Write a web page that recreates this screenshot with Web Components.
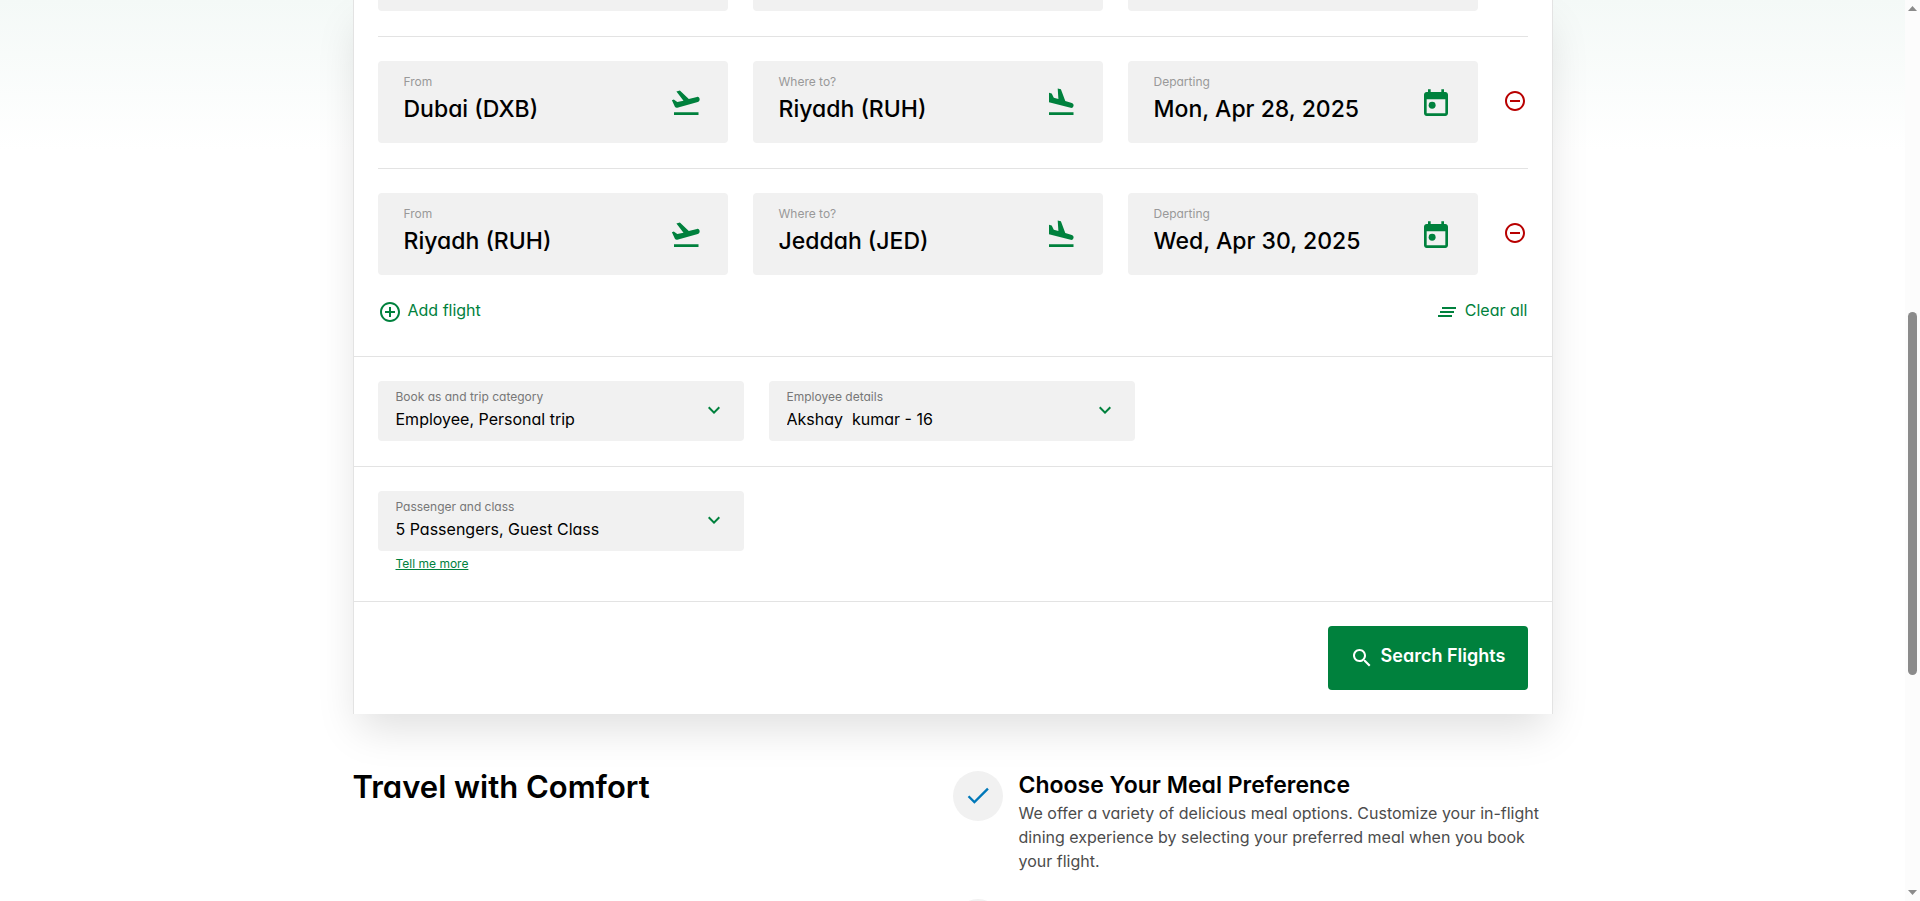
<!DOCTYPE html>
<html lang="en">
<head>
<meta charset="utf-8">
<title>Book flights</title>
<style>
  body {
    margin: 0;
    height: 100vh;
    display: flex;
    overflow: hidden;
    background: #fff;
    color: #000;
    font-family: Inter, "Open Sans", sans-serif;
    font-size: 16px;
    line-height: 24px;
    font-feature-settings: "cv11";
    --green: #00813d;
    --field: #f1f1f1;
    --line: #e3e3e3;
  }
</style>
</head>
<body>
<page-view>
  <booking-card>
    <leg-stub slot="legs"></leg-stub>
    <flight-leg slot="legs" from="Dubai (DXB)" to="Riyadh (RUH)" date="Mon, Apr 28, 2025"></flight-leg>
    <flight-leg slot="legs" from="Riyadh (RUH)" to="Jeddah (JED)" date="Wed, Apr 30, 2025"></flight-leg>
    <picker-field slot="trip" label="Book as and trip category">Employee, Personal trip</picker-field>
    <picker-field slot="trip" label="Employee details">Akshay&nbsp; kumar - 16</picker-field>
    <picker-field slot="class" label="Passenger and class">5 Passengers, Guest Class</picker-field>
  </booking-card>
  <comfort-section>
    <span slot="title">Travel with Comfort</span>
    <comfort-item>
      <span slot="title">Choose Your Meal Preference</span>
      We offer a variety of delicious meal options. Customize your in-flight dining experience by selecting your preferred meal when you book your flight.
    </comfort-item>
    <comfort-item></comfort-item>
  </comfort-section>
</page-view>
<scroll-track></scroll-track>

<script>
const ICONS = {
  takeoff: ['0 0 32 32', '<path d="M4 24.300h24.500V27H4zM27 8.900C28.300 8.600 29.300 9.600 29.600 10.800 29.900 12.200 29.200 13.500 27.800 13.900L7.300 19.800C6.200 20 5.500 19.700 4.900 18.800L1.900 12.300 3.800 11.600 7.300 14 13.500 12.700 6.400 3.600 9.900 2.600 18.800 11z"/>'],
  landing: ['0 0 32 32', '<path d="M4 24.300h24.500V27H4zM4 4.700L6.700 5.400 8.800 9.700 13.400 11 12.700.4 15.900 1.200 20.300 13 26.800 14.900C28.200 15.300 28.900 16.600 28.500 18 28.100 19.500 27 20.200 25.600 19.800L4 14.300z"/>'],
  calendar: ['0 0 24 24', '<path fill-rule="evenodd" d="M19 3h-1V1h-2v2H8V1H6v2H5c-1.100 0-2 .9-2 2v14c0 1.100.9 2 2 2h14c1.100 0 2-.9 2-2V5c0-1.100-.9-2-2-2zm0 16H5V8.500h14z"/><circle cx="9.100" cy="13" r="2.600"/>'],
  remove: ['0 0 24 24', '<path d="M7 11v2h10v-2H7zm5-9C6.480 2 2 6.480 2 12s4.480 10 10 10 10-4.480 10-10S17.520 2 12 2zm0 18c-4.410 0-8-3.590-8-8s3.590-8 8-8 8 3.590 8 8-3.590 8-8 8z"/>'],
  add: ['0 0 24 24', '<path d="M13 7h-2v4H7v2h4v4h2v-4h4v-2h-4V7zm-1-5C6.480 2 2 6.480 2 12s4.480 10 10 10 10-4.480 10-10S17.520 2 12 2zm0 18c-4.410 0-8-3.590-8-8s3.590-8 8-8 8 3.590 8 8-3.590 8-8 8z"/>'],
  clear: ['0 0 24 24', '<path d="M5 13h14v-2H5v2zm-2 4h14v-2H3v2zM7 7v2h14V7H7z"/>'],
  chevron: ['0 0 24 24', '<path d="M16.590 8.590L12 13.170 7.410 8.590 6 10l6 6 6-6z"/>'],
  search: ['0 0 24 24', '<path d="M15.500 14h-.79l-.28-.27C15.410 12.590 16 11.110 16 9.500 16 5.910 13.090 3 9.500 3S3 5.910 3 9.500 5.910 16 9.500 16c1.610 0 3.090-.59 4.230-1.570l.27.28v.79l5 4.990L20.490 19l-4.990-5zm-6 0C7.010 14 5 11.990 5 9.500S7.010 5 9.500 5 14 7.010 14 9.500 11.990 14 9.500 14z"/>'],
  check: ['2 2.500 20 20', '<path d="M9 16.170L4.830 12l-1.420 1.410L9 19 21 7l-1.410-1.410z"/>']
};

const RESET = `
  *, *::before, *::after { box-sizing: border-box; }
  button, input, select { font: inherit; font-feature-settings: inherit; color: inherit; border: 0; margin: 0; padding: 0; background: none; outline: 0; }
  button { cursor: pointer; }
`;

class BaseElement extends HTMLElement {
  connectedCallback() {
    if (this.shadowRoot) return;
    this.attachShadow({ mode: 'open' }).innerHTML =
      `<style>${RESET}${this.styles()}</style>${this.markup()}`;
  }
}

customElements.define('ui-icon', class extends BaseElement {
  styles() { return `
    :host { display: block; flex: none; width: 24px; height: 24px; }
    :host([large]) { width: 32px; height: 32px; }
    svg { display: block; width: 100%; height: 100%; fill: currentColor; }`; }
  markup() {
    const [box, shape] = ICONS[this.getAttribute('name')];
    return `<svg viewBox="${box}" aria-hidden="true">${shape}</svg>`;
  }
});

customElements.define('text-field', class extends BaseElement {
  styles() { return `
    :host { display: flex; align-items: center; box-sizing: border-box; min-width: 0; height: 82px; padding: 4px 26px 0; border-radius: 4px; background: var(--field); }
    .text { flex: 1; min-width: 0; display: grid; gap: 3px; padding-bottom: 9px; }
    label { font-size: 12px; line-height: 16px; color: #999; }
    input { width: 100%; font-size: 23px; font-weight: 500; line-height: 32px; height: 32px; }
    ui-icon { color: var(--green); }`; }
  markup() { return `
    <div class="text"><label for="v">${this.getAttribute('label')}</label>
    <input id="v" type="text" value="${this.getAttribute('value')}"></div>
    <ui-icon large name="${this.getAttribute('icon')}"></ui-icon>`; }
});

customElements.define('leg-stub', class extends BaseElement {
  styles() { return `
    :host { display: grid; grid-template-columns: repeat(3, 1fr) 25px; gap: 25px; padding-bottom: 25px; }
    div { height: 11px; border-radius: 0 0 4px 4px; background: var(--field); }`; }
  markup() { return `<div></div><div></div><div></div>`; }
});

customElements.define('flight-leg', class extends BaseElement {
  styles() { return `
    :host { display: grid; grid-template-columns: repeat(3, 1fr) 25px; gap: 25px; align-items: center; padding: 24px 0 25px; border-top: 1px solid var(--line); }
    button { justify-self: center; padding-bottom: 2px; color: #b80000; }`; }
  markup() { const a = n => this.getAttribute(n); return `
    <text-field label="From" value="${a('from')}" icon="takeoff"></text-field>
    <text-field label="Where to?" value="${a('to')}" icon="landing"></text-field>
    <text-field label="Departing" value="${a('date')}" icon="calendar"></text-field>
    <button type="button" aria-label="Remove flight"><ui-icon name="remove"></ui-icon></button>`; }
});

customElements.define('picker-field', class extends BaseElement {
  styles() { return `
    :host { display: flex; align-items: center; box-sizing: border-box; height: 60px; padding: 0 18px 2px; border-radius: 4px; background: var(--field); }
    .text { flex: 1; min-width: 0; display: grid; gap: 2px; }
    label { font-size: 12px; line-height: 16px; color: #777; }
    select { appearance: none; width: 100%; height: 24px; line-height: 24px; }
    ui-icon { color: var(--green); }`; }
  markup() { return `
    <div class="text"><label for="v">${this.getAttribute('label')}</label>
    <select id="v"><option>${this.textContent.trim()}</option></select></div>
    <ui-icon name="chevron"></ui-icon>`; }
});

customElements.define('booking-card', class extends BaseElement {
  styles() { return `
    :host { display: block; background: #fff; border: 1px solid var(--line); border-width: 0 1px; box-shadow: 0 20px 40px -6px rgba(0, 0, 0, .13); }
    section { padding: 24px 24px 25px; border-top: 1px solid var(--line); }
    .legs { padding: 0 24px 32px; border: 0; }
    .actions, .actions button { display: flex; }
    .actions { justify-content: space-between; }
    .actions button { gap: 6px; color: var(--green); line-height: 20px; }
    .pickers { display: grid; grid-template-columns: repeat(3, minmax(0, 366px)); gap: 25px; }
    .class { padding-bottom: 29px; }
    .more { display: block; width: max-content; margin: 5px 0 0 18px; font-size: 12px; line-height: 16px; color: var(--green); }
    .submit { display: flex; justify-content: flex-end; padding-bottom: 24px; }
    .search { display: flex; align-items: center; justify-content: center; gap: 7px; width: 200px; height: 64px; border-radius: 4px; background: var(--green); color: #fff; font-size: 18px; font-weight: 600; }
    .search span { padding-bottom: 4px; }`; }
  markup() { return `
    <section class="legs">
      <slot name="legs"></slot>
      <div class="actions">
        <button type="button"><ui-icon name="add"></ui-icon>Add flight</button>
        <button type="button"><ui-icon name="clear"></ui-icon>Clear all</button>
      </div>
    </section>
    <section class="pickers"><slot name="trip"></slot></section>
    <section class="class">
      <div class="pickers"><slot name="class"></slot></div>
      <a class="more" href="#more">Tell me more</a>
    </section>
    <section class="submit">
      <button class="search" type="submit"><ui-icon name="search"></ui-icon><span>Search Flights</span></button>
    </section>`; }
});

customElements.define('comfort-section', class extends BaseElement {
  styles() { return `
    :host { display: grid; grid-template-columns: 1fr 1fr; padding-top: 57px; }
    h2 { margin: 0; font-size: 31px; line-height: 32px; font-weight: 600; }
    .items { display: grid; gap: 26px; }`; }
  markup() { return `<h2><slot name="title"></slot></h2><div class="items"><slot></slot></div>`; }
});

customElements.define('comfort-item', class extends BaseElement {
  styles() { return `
    :host { display: flex; align-items: flex-start; gap: 16px; }
    .badge { flex: none; display: grid; place-items: center; width: 50px; height: 50px; border-radius: 50%; background: #f1f1f1; color: #0078b9; }
    h3 { margin: 0 0 2px; font-size: 23px; line-height: 28px; font-weight: 600; }
    p { margin: 0; color: #4c4c4c; }`; }
  markup() { return `
    <div class="badge"><ui-icon name="check"></ui-icon></div>
    <div><h3><slot name="title"></slot></h3><p><slot></slot></p></div>`; }
});

customElements.define('page-view', class extends BaseElement {
  styles() { return `
    :host { display: block; flex: 1; min-width: 0; overflow: hidden; background: linear-gradient(#f4f9f7, #fff 150px); }
    main { max-width: 1200px; margin: 0 auto; }`; }
  markup() { return `<main><slot></slot></main>`; }
});

customElements.define('scroll-track', class extends BaseElement {
  styles() { return `
    :host { display: flex; flex-direction: column; align-items: center; flex: none; width: 15px; padding: 6px 0; background: #fcfcfc; }
    svg { display: block; width: 9px; height: 5px; fill: #8b8b8b; }
    .before { flex: 301; }
    .thumb { flex: 362; width: 9px; border-radius: 5px; background: #8b8b8b; }
    .after { flex: 215; }`; }
  markup() { return `
    <svg viewBox="0 0 9 5"><path d="M4.500 0L9 5H0z"/></svg>
    <div class="before"></div><div class="thumb"></div><div class="after"></div>
    <svg viewBox="0 0 9 5"><path d="M0 0h9L4.500 5z"/></svg>`; }
});
</script>
</body>
</html>
